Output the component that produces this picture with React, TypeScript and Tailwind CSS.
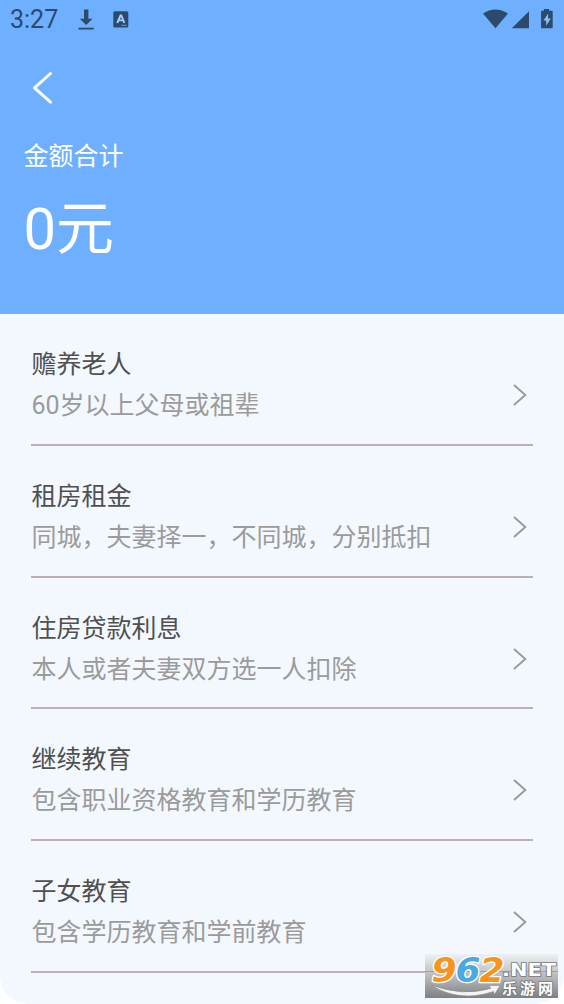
interface Deduction {
    title: string
    desc: string
}

const deductions: Deduction[] = [
    { title: '赡养老人', desc: '60岁以上父母或祖辈' },
    { title: '租房租金', desc: '同城，夫妻择一，不同城，分别抵扣' },
    { title: '住房贷款利息', desc: '本人或者夫妻双方选一人扣除' },
    { title: '继续教育', desc: '包含职业资格教育和学历教育' },
    { title: '子女教育', desc: '包含学历教育和学前教育' },
]

function StatusBar() {
    return (
        <div className="flex h-10 items-center justify-between pl-[10px] pr-[10px] text-[#2c4a6b]">
            <div className="flex items-center">
                <span className="w-[68px] text-[25px] leading-10">3:27</span>
                <svg className="-mt-px" width="16" height="22" viewBox="0 0 16 22" fill="currentColor">
                    <path d="M6 0.5h4.4v9.3h4.1L8.2 16 1.8 9.8H6z" />
                    <path d="M0.5 18.7h15.2v1.8H0.5z" />
                </svg>
                <svg className="-mt-[2px] ml-[19px]" width="16" height="17" viewBox="0 0 16 17">
                    <rect x="0.3" y="0.3" width="15" height="16.2" rx="1.6" fill="currentColor" />
                    <path d="M4.2 12 7.5 4.5h.8L11.4 12M5.5 9.4h4.8" fill="none" stroke="#a5cdfb" strokeWidth="1.9" />
                    <path d="M8.5 14.3h5" stroke="#7ba7d9" strokeWidth="1.2" strokeDasharray="1.2 .6" />
                </svg>
            </div>
            <svg className="-mt-px" width="72" height="22" viewBox="0 0 72 22" fill="currentColor">
                <path d="M1 4.5Q13.5-3.6 26 4.5L13.5 19.3z" />
                <path d="M47 2.2v17H29.8z" />
                <path d="M61.9 0h5.2v1.7h2.8q.8 0 .8.8v16q0 .8-.8.8H59.9q-.8 0-.8-.8v-16q0-.8.8-.8h2z" />
                <path d="M66.2 4.5 61.4 11.5h2.8v5.3l4.6-7.3H66z" fill="#8fbdf3" />
            </svg>
        </div>
    )
}

function DeductionRow({ title, desc }: Deduction) {
    return (
        <div className="flex h-[131.75px] flex-col">
            <div className="flex flex-1 justify-between pt-[33px]">
                <div className="pl-[0.5px]">
                    <h2 className="text-[25px] leading-9 text-[#505050]">{title}</h2>
                    <p className="mt-[5px] text-[25px] leading-9 text-[#9b9b9b]">{desc}</p>
                </div>
                <svg className="mt-[36px] mr-[5px]" width="16" height="24" viewBox="0 0 16 24" fill="none">
                    <path d="M2 2 13.3 12 2 22" stroke="#999" strokeWidth="1.9" />
                </svg>
            </div>
            <div className="h-[2px] bg-[#bab0b5]" />
        </div>
    )
}

function Watermark() {
    return (
        <svg className="absolute right-[6px] bottom-[6px]" width="133" height="44" viewBox="0 0 133 44">
            <defs>
                <linearGradient id="plate" x1="0" y1="0" x2="0" y2="1">
                    <stop offset="0" stopColor="#eef1f5" />
                    <stop offset="0.5" stopColor="#b9bbbe" />
                    <stop offset="1" stopColor="#7e8083" />
                </linearGradient>
            </defs>
            <rect width="133" height="44" fill="url(#plate)" />
            <path d="M0 17.5h133" stroke="#a39da1" />
            <path
                d="M6 31Q38 43 66 34.2L63.5 31.6 75 31.5 69.5 40.5 68.5 37.5Q34 49 6 31z"
                fill="#f4f4f4"
                stroke="#8c8c8c"
                strokeWidth="0.6"
            />
            <g
                fontFamily="'DejaVu Sans', sans-serif"
                fontWeight="700"
                fontStyle="italic"
                fontSize="33"
                stroke="#fff"
                strokeWidth="2.6"
                strokeLinejoin="round"
                paintOrder="stroke"
            >
                <text x="6.5" y="27.5" textLength="25" lengthAdjust="spacingAndGlyphs" fill="#f7941e">9</text>
                <text x="30.5" y="27.5" textLength="25" lengthAdjust="spacingAndGlyphs" fill="#4ba9e1">6</text>
                <text x="54.5" y="27.5" textLength="25" lengthAdjust="spacingAndGlyphs" fill="#f7941e">2</text>
            </g>
            <g fill="#fff" stroke="#77797c" strokeWidth="1.6" paintOrder="stroke" fontWeight="700">
                <text x="77" y="22" fontFamily="'DejaVu Sans', sans-serif" fontSize="18" textLength="54" lengthAdjust="spacingAndGlyphs">.NET</text>
                <text x="77" y="40" fontFamily="'Noto Sans CJK SC', sans-serif" fontSize="15" textLength="51">乐游网</text>
            </g>
        </svg>
    )
}

export default function App() {
    return (
        <div className="relative h-[1004px] w-[564px] overflow-hidden bg-white font-['Roboto','Noto_Sans_CJK_SC',sans-serif]">
            <div className="flex h-full flex-col overflow-hidden rounded-b-[28px] bg-[#f3f8ff]">
                <header className="h-[314px] shrink-0 bg-[#6eafff] text-white">
                    <StatusBar />
                    <svg className="mt-[31px] ml-[31px]" width="24" height="34" viewBox="0 0 24 34" fill="none">
                        <path d="M19.5 2.5 3.5 16.8l16 14.4" stroke="#fff" strokeWidth="3" strokeLinecap="round" strokeLinejoin="round" />
                    </svg>
                    <div className="pt-[34px] pl-[23.5px]">
                        <p className="text-[25px] leading-9">金额合计</p>
                        <p className="mt-[14px] text-[58px] leading-[80px]">0元</p>
                    </div>
                </header>
                <main className="flex flex-col pr-[31px] pl-[31px]">
                    {deductions.map((item) => (
                        <DeductionRow key={item.title} title={item.title} desc={item.desc} />
                    ))}
                </main>
            </div>
            <Watermark />
        </div>
    )
}
